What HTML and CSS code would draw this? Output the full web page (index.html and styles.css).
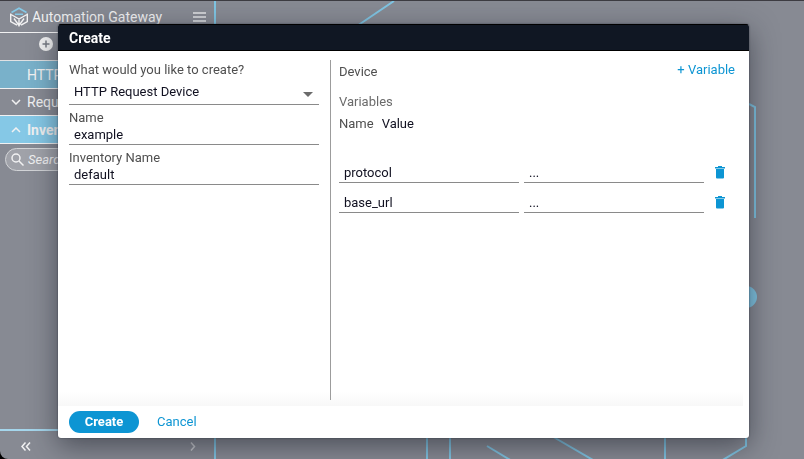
FILE: index.html
```html
<!DOCTYPE html>
<html lang="en">
<head>
<meta charset="utf-8">
<title>Automation Gateway</title>
<link rel="stylesheet" href="styles.css">
</head>
<body>
<div class="app">
  <nav class="sidebar">
    <header class="brand">
      <svg class="logo" viewBox="0 0 20 20" fill="none">
        <path d="M2.500 5.500 10 1.200l7.500 4.300M6 7.300h8" stroke="#85c8e6" stroke-width="1.600"/>
        <path d="M1.700 6.500v8L8 18.200M18.300 6.500v8L12 18.200M2 7.500l8 4.500 8-4.500M10 12v7.500M5 11.500l5 7 5-7" stroke="#f1f1f2" stroke-width="1.400"/>
      </svg>
      <span class="brand-name">Automation Gateway</span>
      <button class="plain" aria-label="Menu"><svg width="13" height="10" viewBox="0 0 13 10" stroke="#e4e5e7" stroke-width="1.500"><path d="M0 1h13M0 5h13M0 9h13"/></svg></button>
    </header>
    <div class="add-row">
      <button class="plain" aria-label="Add"><svg width="14" height="14" viewBox="0 0 14 14"><circle cx="7" cy="7" r="7" fill="#f1f1f2"/><path d="M3.500 7h7M7 3.500v7" stroke="#777b84" stroke-width="1.500"/></svg></button>
    </div>
    <a class="item item-current" href="#">HTTP Requests</a>
    <a class="item" href="#"><svg class="chevron" viewBox="0 0 10 6"><path d="M1 1l4 4 4-4"/></svg>Requests</a>
    <a class="item item-open" href="#"><svg class="chevron" viewBox="0 0 10 6"><path d="M1 5l4-4 4 4"/></svg>Inventory</a>
    <label class="search">
      <svg width="13" height="13" viewBox="0 0 13 13" fill="none" stroke="#f1f1f2" stroke-width="1.500"><circle cx="5" cy="5" r="4"/><path d="M8 8l4.500 4.500"/></svg>
      <input type="search" placeholder="Search" aria-label="Search">
    </label>
    <footer class="sidebar-foot">
      <button class="plain" aria-label="Collapse"><svg width="10" height="9" viewBox="0 0 10 9" fill="none" stroke="#f1f1f2" stroke-width="1.500"><path d="M4.500.5l-3.500 4 3.500 4M9 .5l-3.500 4 3.500 4"/></svg></button>
      <button class="plain" aria-label="Next"><svg width="6" height="9" viewBox="0 0 6 9" fill="none" stroke="#c6c8cc" stroke-width="1.500"><path d="M1 .5l3.500 4-3.500 4"/></svg></button>
    </footer>
  </nav>
  <main class="canvas">
    <svg class="art" viewBox="216 0 588 459" preserveAspectRatio="xMinYMin slice" fill="none" stroke="#7fc4e2" stroke-width="2">
      <path d="M394 0l-37 25M749 103l6 3v111M427 430v29M450 430v29M487 445l25 15M550 434l43 25M665 430v29M746 430v15l-25 15"/>
      <circle cx="746" cy="296" r="11" fill="#7fc4e2" stroke="none"/>
    </svg>
  </main>
</div>

<div class="overlay">
  <form class="dialog" role="dialog" aria-labelledby="dialog-title">
    <h1 class="dialog-head" id="dialog-title">Create</h1>
    <div class="dialog-body">
      <section class="details">
        <div class="field">
          <label for="kind">What would you like to create?</label>
          <div class="select">
            <select id="kind"><option>HTTP Request Device</option></select>
            <svg class="arrow" viewBox="0 0 10 5"><path d="M0 0h10L5 5z" fill="#6b6b6b"/></svg>
          </div>
        </div>
        <div class="field">
          <label for="name">Name</label>
          <input id="name" type="text" value="example">
        </div>
        <div class="field">
          <label for="inventory">Inventory Name</label>
          <input id="inventory" type="text" value="default">
        </div>
      </section>
      <section class="device">
        <div class="device-head">
          <h2>Device</h2>
          <button class="link" type="button">+ Variable</button>
        </div>
        <h3>Variables</h3>
        <div class="columns"><span>Name</span><span class="strong">Value</span></div>
        <div class="variables">
          <div class="variable">
            <input type="text" value="protocol" aria-label="Variable name">
            <input type="text" value="..." aria-label="Variable value">
            <button class="plain" type="button" aria-label="Delete protocol"><svg width="10" height="13" viewBox="0 0 10 13" fill="#0d95d3"><path d="M3 0h4v1h3v1.500H0V1h3zM1 3h8v8.500q0 1-1 1H2q-1 0-1-1z"/></svg></button>
          </div>
          <div class="variable">
            <input type="text" value="base_url" aria-label="Variable name">
            <input type="text" value="..." aria-label="Variable value">
            <button class="plain" type="button" aria-label="Delete base_url"><svg width="10" height="13" viewBox="0 0 10 13" fill="#0d95d3"><path d="M3 0h4v1h3v1.500H0V1h3zM1 3h8v8.500q0 1-1 1H2q-1 0-1-1z"/></svg></button>
          </div>
        </div>
      </section>
    </div>
    <footer class="dialog-foot">
      <button class="primary" type="button">Create</button>
      <button class="link" type="button">Cancel</button>
    </footer>
  </form>
</div>
</body>
</html>
```
FILE: styles.css
```css
* { box-sizing: border-box; }
body {
  margin: 0;
  background: #000;
  font: 13px/16px Roboto, sans-serif;
  color: #4f4f4f;
  overflow: hidden;
}
button, input, select { font: inherit; }
svg { display: block; }
.plain { display: block; padding: 0; border: 0; background: none; }

.app {
  display: flex;
  height: 100vh;
  border-top: 1px solid #3d3c42;
  border-bottom-left-radius: 8px;
  background: #878a93;
  overflow: hidden;
}
.sidebar {
  display: flex;
  flex-direction: column;
  flex: 0 0 216px;
  border-right: 2px solid #7fc4e2;
  color: #f1f1f2;
}
.brand {
  display: flex;
  align-items: center;
  height: 32px;
  padding: 0 8px 0 9px;
  border-bottom: 1px solid #f1f1f2;
}
.logo { width: 20px; height: 20px; margin-right: 3px; }
.brand-name { flex: 1; font-size: 14px; white-space: nowrap; }
.add-row { height: 28px; padding: 4px 39px; border-bottom: 1px solid #e0e1e3; }
.item {
  display: flex;
  align-items: center;
  height: 27px;
  padding-left: 11px;
  border-bottom: 1px solid #f1f1f2;
  color: inherit;
  font-size: 14px;
  text-decoration: none;
}
.item-current { height: 28px; padding-left: 27px; background: #79b1ca; }
.item-open { height: 28px; background: #85c8e6; font-weight: 700; }
.chevron { width: 10px; height: 6px; margin-right: 6px; fill: none; stroke: #f1f1f2; stroke-width: 1.5; }
.search {
  display: flex;
  align-items: center;
  gap: 4px;
  height: 23px;
  margin: 4px 5px;
  padding: 0 5px;
  border: 1px solid #d2d4d7;
  border-radius: 12px;
  background: #a0a2a9;
}
.search input { min-width: 0; flex: 1; padding: 0; border: 0; background: none; }
.search input::placeholder { color: #f1f1f2; font-style: italic; }
.sidebar-foot {
  display: flex;
  justify-content: space-between;
  align-items: center;
  height: 30px;
  margin-top: auto;
  padding: 2px 18px 0 21px;
  border-top: 2px solid #a5d6ec;
}
.canvas { flex: 1; min-width: 0; overflow: hidden; }
.art { width: 100%; height: 100%; }

.overlay {
  position: fixed;
  inset: 0;
  display: flex;
  padding: 24px 55px 21px 58px;
}
.dialog {
  display: flex;
  flex-direction: column;
  flex: 1;
  border-radius: 3px;
  background: #fff;
  box-shadow: 0 8px 28px rgba(25, 29, 40, .55), 0 0 2px rgba(25, 29, 40, .6);
  overflow: hidden;
}
.dialog-head {
  margin: 0;
  height: 27px;
  padding: 0 11px;
  border: solid #000;
  border-width: 1px 0;
  background: #101723;
  color: #fff;
  font-size: 14px;
  font-weight: 700;
  line-height: 26px;
}
.dialog-body {
  display: grid;
  grid-template-columns: 272px 1fr;
  flex: 1;
  padding: 9px 0 6px;
  background: linear-gradient(transparent 96%, #f8f8f8) left / calc(100% - 6px) 100% no-repeat;
}
.details {
  display: flex;
  flex-direction: column;
  gap: 4px;
  padding: 1px 11px 0;
}
.device { padding: 0 14px 0 8px; border-left: 1px solid #9c9c9c; }
.field label { display: block; line-height: 17px; }
.field input, .variable input, select {
  width: 100%;
  height: 20px;
  padding: 0 5px 1px;
  border: 0;
  border-bottom: 1px solid #8a8a8a;
  border-radius: 0;
  background: none;
  color: #101020;
}
.field input { height: 19px; }
.select { position: relative; }
.field select { appearance: none; height: 27px; padding: 1px 5px 0; }
.arrow { position: absolute; right: 6px; top: 14px; width: 10px; height: 5px; pointer-events: none; }
.device-head { display: flex; justify-content: space-between; height: 20px; }
h2, h3 { margin: 0; font-size: 13px; font-weight: 400; }
h2 { line-height: 24px; }
.device-head .link { line-height: 20px; }
h3 { margin-top: 14px; color: #6b6b6b; }
.columns { display: flex; gap: 8px; margin-top: 6px; }
.strong { color: #101020; }
.variables { display: grid; gap: 10px; margin-top: 31px; }
.variable {
  display: grid;
  grid-template-columns: 1fr 1fr 16px;
  gap: 5px;
  align-items: center;
  padding-right: 10px;
}
.variable .plain { justify-self: end; margin-bottom: 2px; }
.link { padding: 0; border: 0; background: none; color: #0d95d3; }
.dialog-foot {
  display: flex;
  align-items: center;
  gap: 18px;
  height: 32px;
  padding: 0 11px;
}
.primary {
  width: 70px;
  height: 22px;
  padding: 0;
  border: 0;
  border-radius: 11px;
  background: #0d95d3;
  color: #fff;
  font-weight: 700;
}
```
